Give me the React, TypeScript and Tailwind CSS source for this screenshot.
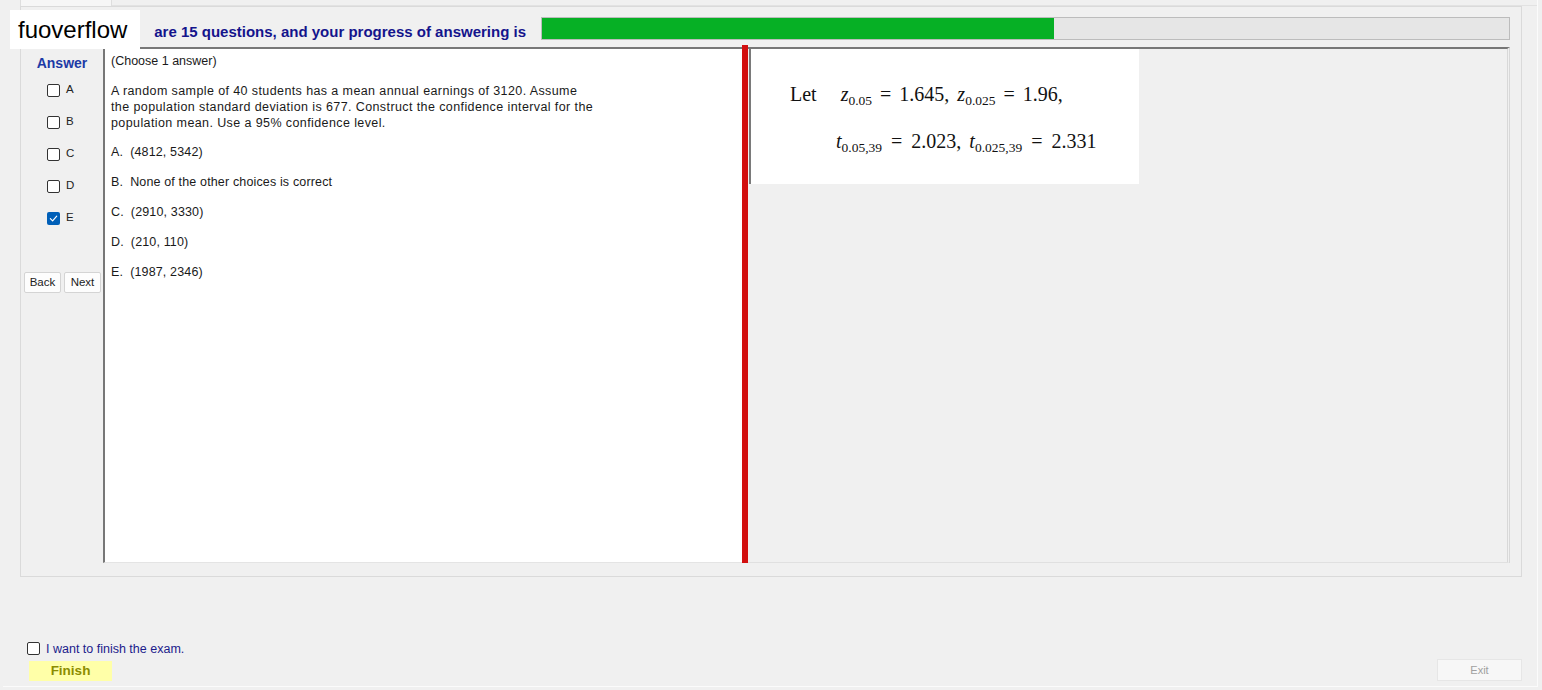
import React from 'react'

const answers = ['A', 'B', 'C', 'D', 'E']

const options = [
  { key: 'A', text: '(4812, 5342)' },
  { key: 'B', text: 'None of the other choices is correct' },
  { key: 'C', text: '(2910, 3330)' },
  { key: 'D', text: '(210, 110)' },
  { key: 'E', text: '(1987, 2346)' },
]

function Box({ checked }: { checked?: boolean }) {
  if (checked) {
    return (
      <div className="w-[13px] h-[13px] rounded-[2px] bg-[#005fb8] flex items-center justify-center">
        <svg width="9" height="9" viewBox="0 0 10 10" fill="none">
          <path d="M1.5 5.2 L4 7.6 L8.6 2.4" stroke="white" strokeWidth="1.3" strokeLinecap="round" strokeLinejoin="round" />
        </svg>
      </div>
    )
  }
  return <div className="w-[13px] h-[13px] rounded-[2px] border border-[#333] bg-white" />
}

function Sub({ children }: { children: React.ReactNode }) {
  return <span className="text-[13.5px] align-[-4px]">{children}</span>
}

export default function App() {
  return (
    <div className="relative w-[1542px] h-[690px] bg-[#f0f0f0] overflow-hidden font-['Liberation_Sans',Arial,sans-serif] text-[#1a1a1a]">
      <div className="ml-[3px] w-[1535px] h-[687px] border-r border-b border-[#fbfbfb] flex flex-col">
        {/* top tab strip */}
        <div className="h-[6px] flex">
          <div className="ml-[17px] w-[92px] h-[6px] bg-[#f6f6f6] border-x border-[#dedede]" />
          <div className="flex-1 border-b border-[#e2e2e2]" />
        </div>

        {/* group box */}
        <div className="ml-[17px] w-[1502px] h-[571px] border border-[#dadada] flex flex-col">
          {/* header */}
          <div className="mt-[10px] h-[23px] flex items-start">
            <div className="mt-[6px] w-[520px] pr-[15px] text-right text-[15px] leading-[18px] font-bold text-[#14148c] whitespace-nowrap">
              are 15 questions, and your progress of answering is
            </div>
            <div className="w-[969px] h-[23px] border border-[#bcbcbc] bg-[#e6e6e6]">
              <div className="w-[512px] h-full bg-[#06b025]" />
            </div>
          </div>

          {/* content */}
          <div className="mt-[7px] h-[516px] flex">
            {/* answer column */}
            <div className="w-[82px] flex flex-col">
              <div className="pt-[8px] h-[24px] leading-[16px] text-center text-[14px] font-bold text-[#1d3aa6]">Answer</div>
              <div className="mt-[3px] flex flex-col">
                {answers.map(a => (
                  <div key={a} className="h-[32px] pl-[26px] flex items-center gap-[6px]">
                    <Box checked={a === 'E'} />
                    <span className="text-[11.5px] text-[#222]">{a}</span>
                  </div>
                ))}
              </div>
              <div className="mt-[38px] pl-[3px] flex gap-[3px]">
                <button className="w-[37px] h-[21px] bg-[#fdfdfd] border border-[#d4d4d4] rounded-[2px] text-[11.5px] text-[#222]">Back</button>
                <button className="w-[37px] h-[21px] bg-[#fdfdfd] border border-[#d4d4d4] rounded-[2px] text-[11.5px] text-[#222]">Next</button>
              </div>
            </div>

            {/* question panel */}
            <div className="w-[639px] h-full bg-white border-l-2 border-t-2 border-[#777] border-b border-b-[#e4e4e4] pl-[6px] pt-[4px] text-[12.5px] leading-[16px]">
              <div>(Choose 1 answer)</div>
              <div className="mt-[14px] tracking-[0.4px]">
                A random sample of 40 students has a mean annual earnings of 3120. Assume<br />
                the population standard deviation is 677. Construct the confidence interval for the<br />
                population mean. Use a 95% confidence level.
              </div>
              <div className="mt-[6px] flex flex-col tracking-[0.15px]">
                {options.map(o => (
                  <div key={o.key} className="h-[30px] flex items-center">
                    <span>{o.key}.</span>
                    <span className="ml-[7px]">{o.text}</span>
                  </div>
                ))}
              </div>
            </div>

            {/* splitter */}
            <div className="w-[6px] h-[518px] -mt-[2px] bg-[#d20f0f]" />

            {/* right panel */}
            <div className="w-[762px] h-full border-t-2 border-[#777] border-r-[3px] border-r-[#d8d8d8] border-double border-b border-b-[#e0e0e0]">
              <div className="ml-[1px] w-[390px] h-[135px] bg-white border-l-2 border-[#7a7a7a] font-['Liberation_Serif','DejaVu_Serif',serif] text-[20px] text-[#111]">
                <div className="pt-[33px] pl-[39px] leading-[24px] flex items-baseline whitespace-nowrap">
                  <span>Let</span>
                  <span className="ml-[24px]"><i>z</i><Sub>0.05</Sub></span>
                  <span className="mx-[8px]">=</span>
                  <span>1.645,</span>
                  <span className="ml-[8px]"><i>z</i><Sub>0.025</Sub></span>
                  <span className="mx-[8px]">=</span>
                  <span>1.96,</span>
                </div>
                <div className="mt-[16px] pl-[85px] leading-[24px] flex items-baseline whitespace-nowrap">
                  <span><i>t</i><Sub>0.05,39</Sub></span>
                  <span className="mx-[9px]">=</span>
                  <span>2.023,</span>
                  <span className="ml-[8px]"><i>t</i><Sub>0.025,39</Sub></span>
                  <span className="mx-[9px]">=</span>
                  <span>2.331</span>
                </div>
              </div>
            </div>
          </div>
        </div>

        {/* bottom area */}
        <div className="mt-[63px] h-[16px] ml-[24px] flex items-center gap-[6px]">
          <div className="w-[13px] h-[13px] rounded-[2px] border border-[#333] bg-white" />
          <span className="text-[12.5px] text-[#1c1c8c] mt-[3px]">I want to finish the exam.</span>
        </div>
        <div className="mt-[3px] flex items-start justify-between">
          <button className="ml-[26px] mt-[2px] w-[83px] h-[20px] bg-[#ffffa8] text-[13.5px] font-bold text-[#8c8c00] flex items-center justify-center">
            Finish
          </button>
          <button className="mr-[15px] w-[85px] h-[22px] bg-[#f7f7f7] border border-[#e6e6e6] text-[11px] text-[#a0a0a0] flex items-center justify-center">
            Exit
          </button>
        </div>
      </div>

      {/* watermark */}
      <div className="absolute left-[10px] top-[10px] w-[130px] h-[39px] bg-white flex items-center pl-[8px] text-[24px] text-black leading-none">
        fuoverflow
      </div>
    </div>
  )
}
